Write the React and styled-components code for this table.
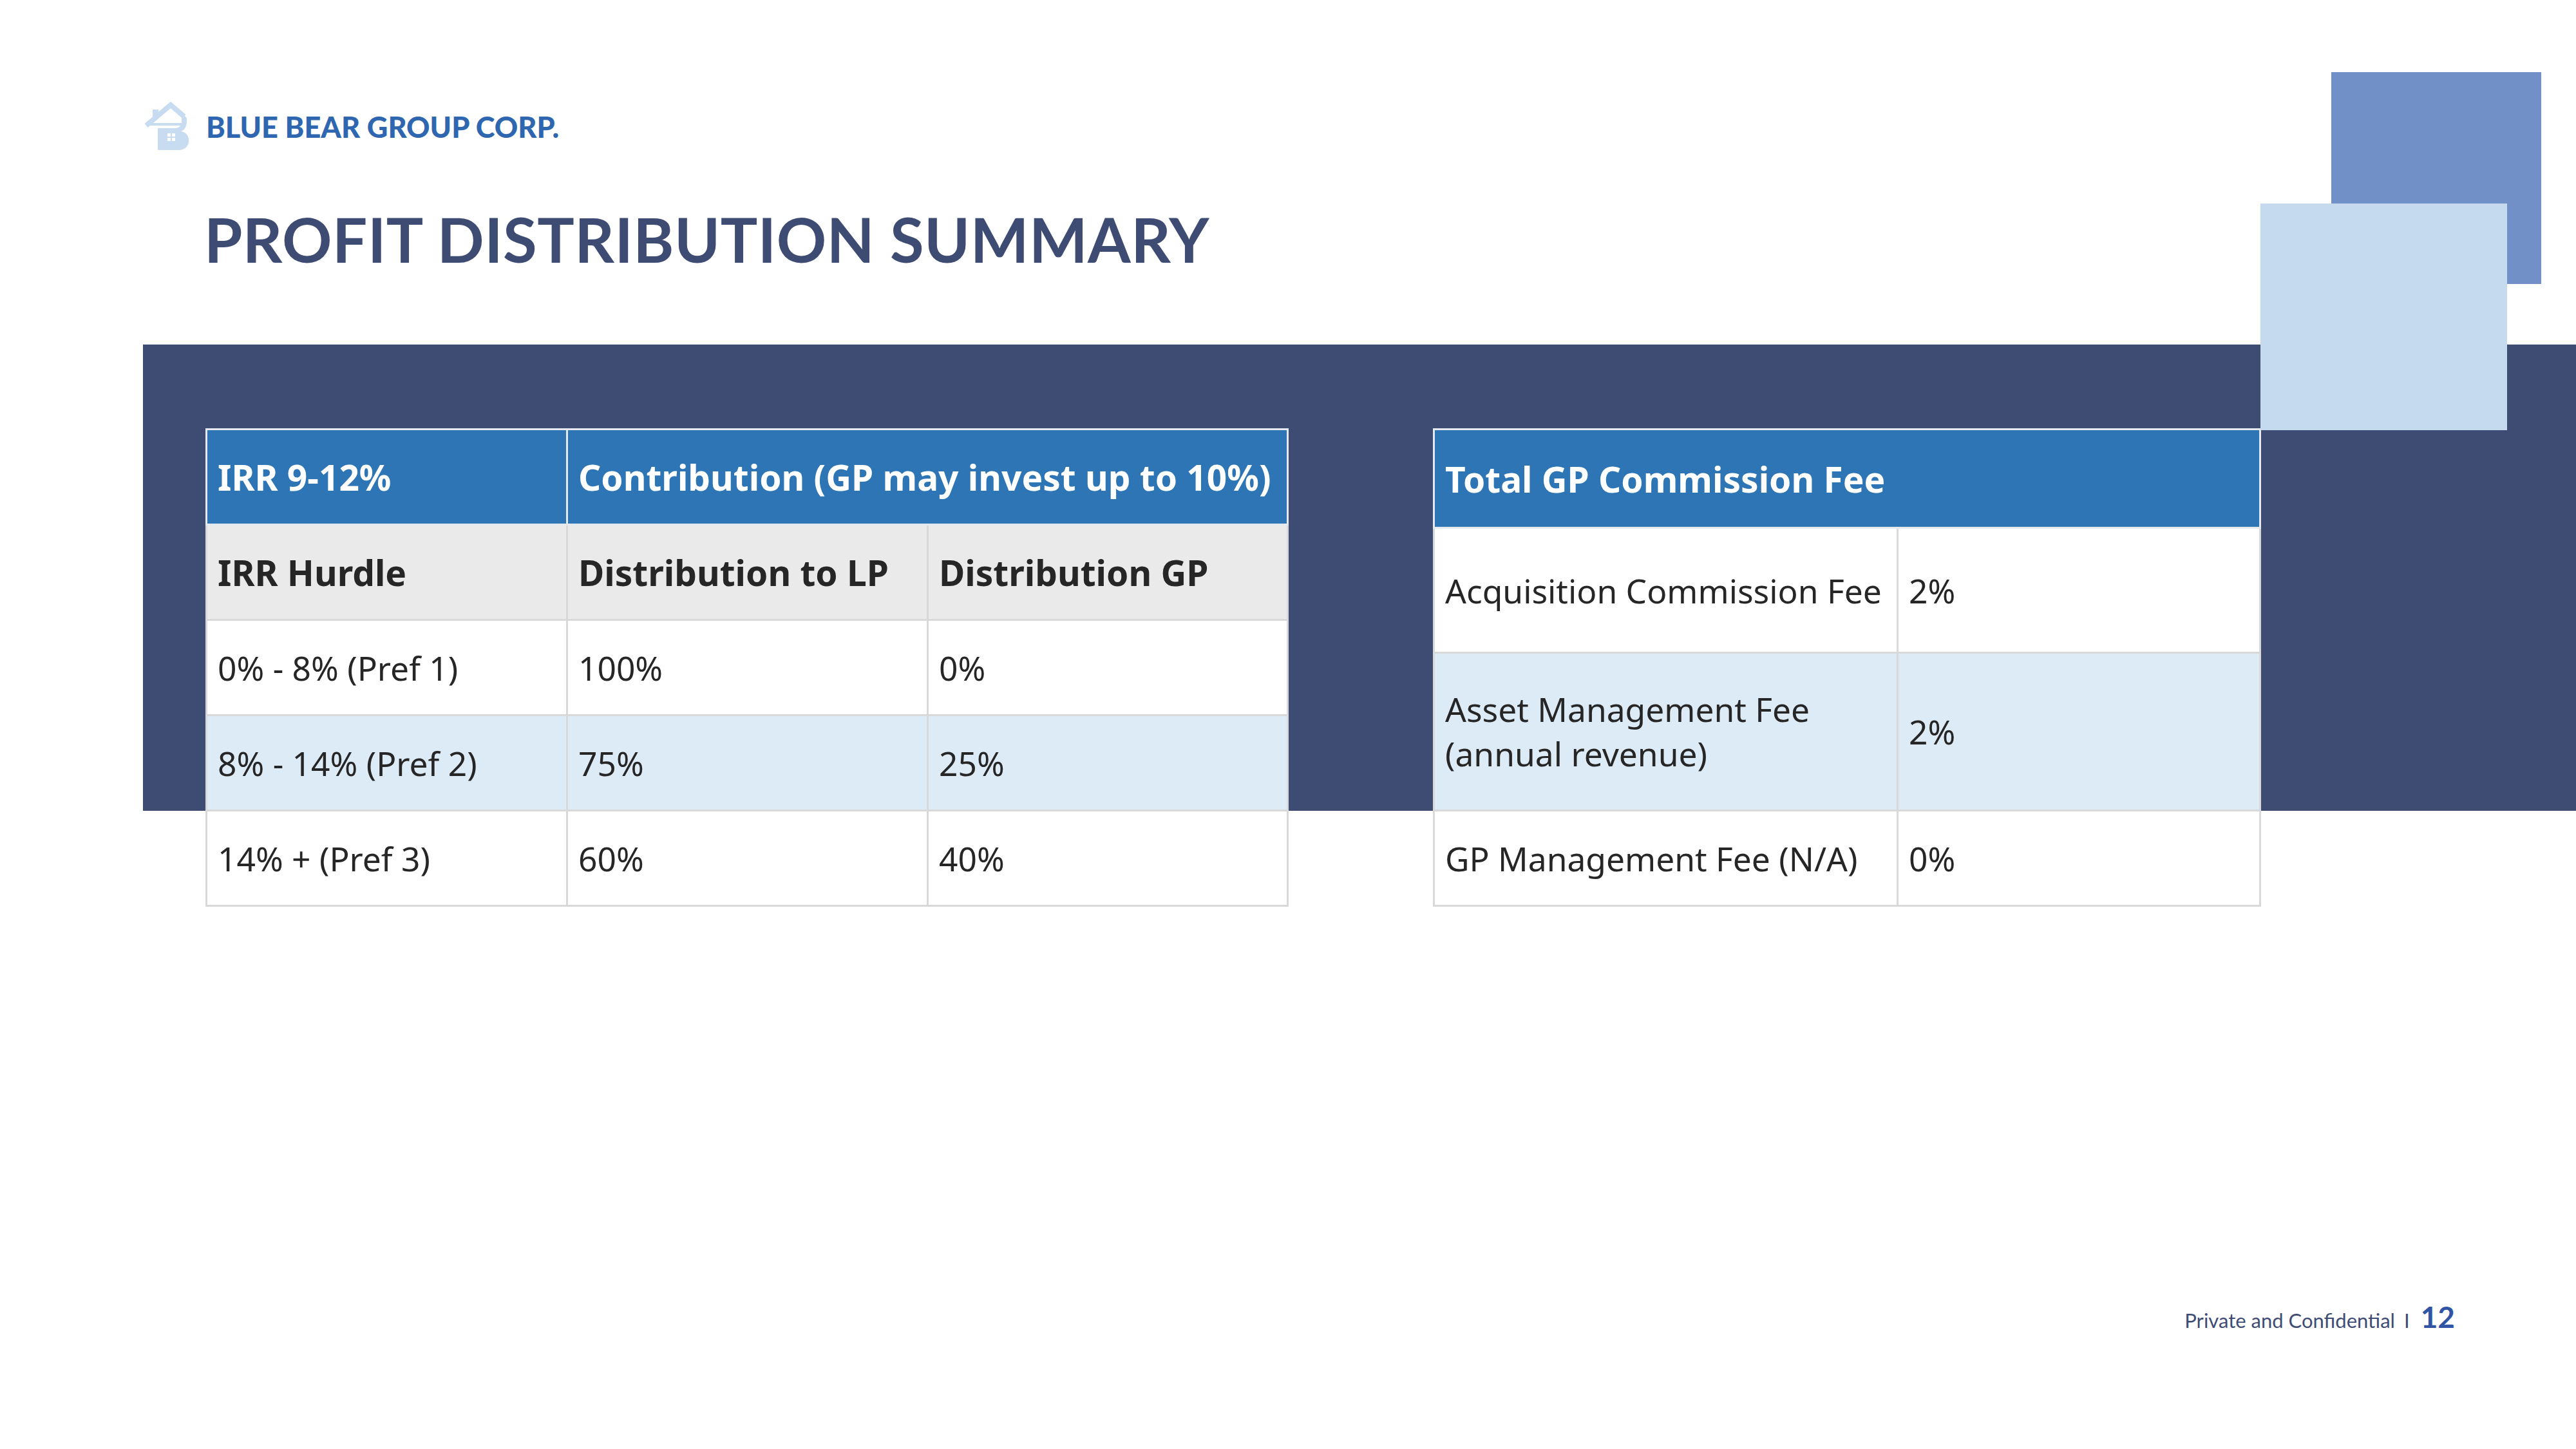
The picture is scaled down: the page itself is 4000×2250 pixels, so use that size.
import styled, { createGlobalStyle } from "styled-components";

const GlobalStyle = createGlobalStyle`
  html, body {
    margin: 0;
    padding: 0;
    background: #ffffff;
  }
`;

const NAVY = "#3e4c74";
const LOGO_BLUE = "#c7dcf1";

const distribution = [
  { hurdle: "0% - 8% (Pref 1)", lp: "100%", gp: "0%" },
  { hurdle: "8% - 14% (Pref 2)", lp: "75%", gp: "25%", shade: true },
  { hurdle: "14% + (Pref 3)", lp: "60%", gp: "40%" },
];

const fees = [
  { label: "Acquisition Commission Fee", value: "2%", height: 194 },
  {
    label: ["Asset Management Fee", "(annual revenue)"],
    value: "2%",
    height: 245,
    shade: true,
  },
  { label: "GP Management Fee (N/A)", value: "0%", height: 148 },
];

// house-with-a-B mark, drawn by hand
const LogoMark = () => (
  <svg width="72" height="76" viewBox="0 0 72 76">
    <rect x="14" y="12" width="9" height="14" fill={LOGO_BLUE} />
    <path
      d="M4 37 L42 5 L63 23"
      fill="none"
      stroke={LOGO_BLUE}
      strokeWidth="8"
      strokeLinejoin="miter"
    />
    <rect x="5" y="33" width="54" height="4" fill={LOGO_BLUE} />
    <path
      d="M22 41 L22 75 L54 75 C66 75 71 67 70 58 C69 50 64 47 58 46 C64 44 67 38 67 30 L67 25 L59 18 L59 30 C59 37 55 41 49 41 Z"
      fill={LOGO_BLUE}
    />
    <rect x="37" y="49" width="5" height="5" fill="#ffffff" />
    <rect x="44" y="49" width="5" height="5" fill="#ffffff" />
    <rect x="37" y="56" width="5" height="5" fill="#ffffff" />
    <rect x="44" y="56" width="5" height="5" fill="#ffffff" />
  </svg>
);

const App = () => {
  return (
    <>
      <GlobalStyle />
      <Slide>
        <Brand>
          <LogoMark />
          <BrandName>BLUE BEAR GROUP CORP.</BrandName>
        </Brand>
        <Title>PROFIT DISTRIBUTION SUMMARY</Title>

        <Band>
          <TablesRow>
            <Grid $width={1679}>
              <colgroup>
                <col style={{ width: 560 }} />
                <col style={{ width: 560 }} />
                <col style={{ width: 559 }} />
              </colgroup>
              <tbody>
                <Row $height={148}>
                  <HeadCell $tone="blue">IRR 9-12%</HeadCell>
                  <HeadCell $tone="blue" colSpan={2}>
                    Contribution (GP may invest up to 10%)
                  </HeadCell>
                </Row>
                <Row $height={148}>
                  <HeadCell $tone="grey">IRR Hurdle</HeadCell>
                  <HeadCell $tone="grey">Distribution to LP</HeadCell>
                  <HeadCell $tone="grey">Distribution GP</HeadCell>
                </Row>
                {distribution.map((r) => (
                  <Row key={r.hurdle} $height={148} $shade={r.shade}>
                    <Cell>{r.hurdle}</Cell>
                    <Cell>{r.lp}</Cell>
                    <Cell>{r.gp}</Cell>
                  </Row>
                ))}
              </tbody>
            </Grid>

            <Grid $width={1283}>
              <colgroup>
                <col style={{ width: 720 }} />
                <col style={{ width: 563 }} />
              </colgroup>
              <tbody>
                <Row $height={153}>
                  <HeadCell $tone="blue" colSpan={2}>
                    Total GP Commission Fee
                  </HeadCell>
                </Row>
                {fees.map((f) => (
                  <Row key={f.value + f.height} $height={f.height} $shade={f.shade}>
                    <Cell>
                      {Array.isArray(f.label)
                        ? f.label.map((l) => <Line key={l}>{l}</Line>)
                        : f.label}
                    </Cell>
                    <Cell>{f.value}</Cell>
                  </Row>
                ))}
              </tbody>
            </Grid>
          </TablesRow>
        </Band>

        <Footer>
          <FooterText $gap={14}>Private and Confidential</FooterText>
          <FooterText $gap={17}>I</FooterText>
          <PageNum>12</PageNum>
        </Footer>

        <Square $tone="dark" />
        <Square $tone="light" />
      </Slide>
    </>
  );
};

const Slide = styled.div`
  position: relative;
  width: 4000px;
  height: 2250px;
  display: flex;
  flex-direction: column;
  background: #ffffff;
  overflow: hidden;
`;

const Brand = styled.div`
  display: flex;
  align-items: center;
  gap: 25px;
  height: 77px;
  margin-top: 157px;
  padding-left: 223px;
`;

const BrandName = styled.div`
  font-family: Lato, "Noto Sans", sans-serif;
  font-weight: 900;
  font-size: 45px;
  color: #2f66b0;
  letter-spacing: 0;
  margin-top: 2px;
`;

const Title = styled.h1`
  margin: 79px 0 0;
  padding-left: 317px;
  font-family: Lato, "Noto Sans", sans-serif;
  font-weight: 700;
  font-size: 96px;
  line-height: 1.2;
  letter-spacing: 0.45px;
  color: ${NAVY};
`;

const Band = styled.section`
  margin-top: 107px;
  margin-left: 222px;
  padding-top: 130px;
  background: linear-gradient(${NAVY}, ${NAVY}) no-repeat;
  background-size: 100% 724px;
`;

const TablesRow = styled.div`
  display: flex;
  align-items: flex-start;
  gap: 224px;
  padding-left: 97px;
`;

const Grid = styled.table`
  width: ${(p) => p.$width}px;
  table-layout: fixed;
  border-collapse: collapse;
  border: 3px solid #d9d9d9;
  font-family: "Noto Sans", sans-serif;
  background: #ffffff;
`;

const Row = styled.tr`
  height: ${(p) => p.$height}px;
  background: ${(p) => (p.$shade ? "#ddebf7" : "#ffffff")};
`;

const HeadCell = styled.td`
  padding: 0 16px;
  vertical-align: middle;
  font-size: 55px;
  font-weight: 700;
  white-space: nowrap;
  color: ${(p) => (p.$tone === "blue" ? "#ffffff" : "#262626")};
  background: ${(p) => (p.$tone === "blue" ? "#2e75b6" : "#eaeaea")};
  border: 3px solid ${(p) => (p.$tone === "blue" ? "#e4e9f0" : "#d9d9d9")};
`;

const Cell = styled.td`
  padding: 0 16px;
  vertical-align: middle;
  font-size: 51.5px;
  font-weight: 400;
  color: #262626;
  white-space: nowrap;
  border: 3px solid #d9d9d9;
`;

const Line = styled.div`
  line-height: 69px;
`;

const Footer = styled.footer`
  margin-top: auto;
  display: flex;
  justify-content: flex-end;
  align-items: baseline;
  padding: 0 188px 178px 0;
  line-height: 1.2;
`;

const FooterText = styled.span`
  font-family: Lato, "Noto Sans", sans-serif;
  font-size: 31px;
  color: ${NAVY};
  margin-right: ${(p) => p.$gap}px;
`;

const PageNum = styled.span`
  font-family: Lato, "Noto Sans", sans-serif;
  font-size: 46px;
  font-weight: 700;
  color: #2f55a4;
`;

const Square = styled.div`
  position: absolute;
  ${(p) =>
    p.$tone === "dark"
      ? `left: 3620px; top: 112px; width: 326px; height: 329px; background: #7190c7;`
      : `left: 3510px; top: 316px; width: 383px; height: 352px; background: #c5d9ef;`}
`;

export default App;
